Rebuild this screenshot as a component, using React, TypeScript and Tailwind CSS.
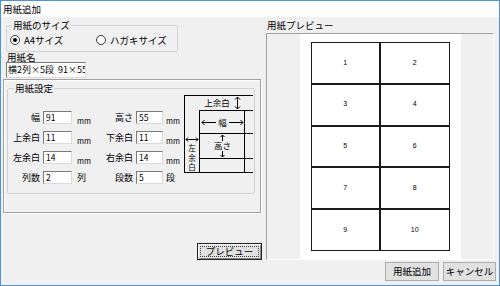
import React from 'react'

const rows = [
  { l1: '幅', v1: '91', l2: '高さ', v2: '55', u1: 'mm', u2: 'mm' },
  { l1: '上余白', v1: '11', l2: '下余白', v2: '11', u1: 'mm', u2: 'mm' },
  { l1: '左余白', v1: '14', l2: '右余白', v2: '14', u1: 'mm', u2: 'mm' },
  { l1: '列数', v1: '2', l2: '段数', v2: '5', u1: '列', u2: '段' },
]

const Radio: React.FC<{ checked?: boolean; label: string; className?: string }> = ({ checked, label, className }) => (
  <div className={`flex items-center gap-[4px] ${className ?? ''}`}>
    <span className="w-[10px] h-[10px] rounded-full border border-[#3c3c3c] bg-white flex items-center justify-center">
      {checked && <span className="w-[4px] h-[4px] rounded-full bg-black" />}
    </span>
    <span className="text-[9.5px] leading-[12px]">{label}</span>
  </div>
)

const Field: React.FC<{ value: string; width: string }> = ({ value, width }) => (
  <div className={`${width} h-[13px] bg-white border border-t-[#7a7a7a] border-l-[#7a7a7a] border-r-[#d9d9d9] border-b-[#d9d9d9] text-[8.5px] leading-[11px] pl-[2px] overflow-hidden whitespace-nowrap`}>
    {value}
  </div>
)

const Diagram = () => (
  <svg width="69" height="78" viewBox="0 0 69 78" className="flex-none mt-[1px]" shapeRendering="crispEdges">
    <g stroke="#000" strokeWidth="1" fill="none">
      <path d="M0 0.5H69M0.5 0V78M15 15.5H69M15.5 15V78M60.5 15V78M15 38.5H69M15 63.5H69M0 77.5H69" />
    </g>
    <g stroke="#000" strokeWidth="1" fill="none" shapeRendering="auto">
      <path d="M53.5 2V14M51 4.5L53.5 2L56 4.5M51 11.5L53.5 14L56 11.5" />
      <path d="M18 27.5H32M20.5 25L18 27.5L20.5 30M45 27.5H59M56.5 25L59 27.5L56.5 30" />
      <path d="M38.5 40V46M36.5 42L38.5 40L40.5 42M38.5 56V62M36.5 60L38.5 62L40.5 60" />
      <path d="M2 44.5H14M4 42.5L2 44.5L4 46.5M12 42.5L14 44.5L12 46.5" />
    </g>
    <g fill="#000" fontSize="8.5" fontFamily="'Noto Sans CJK JP', sans-serif" textAnchor="middle">
      <text x="33" y="11">上余白</text>
      <text x="38.5" y="31">幅</text>
      <text x="38.5" y="54">高さ</text>
    </g>
    <g fill="#000" fontSize="7.5" fontFamily="'Noto Sans CJK JP', sans-serif" textAnchor="middle">
      <text x="8" y="56">左</text>
      <text x="8" y="65.5">余</text>
      <text x="8" y="75">白</text>
    </g>
  </svg>
)

export default function App() {
  return (
    <div className="w-[500px] h-[286px] border border-[#4a94dc] bg-[#f0f0f0] flex flex-col text-black font-['Noto_Sans_CJK_JP','Noto_Sans',sans-serif] overflow-hidden">
      <div className="h-[16px] bg-white flex items-center pl-[2px] text-[9.5px] leading-[12px]">用紙追加</div>

      <div className="flex gap-[3px] h-[243px]">
        <div className="w-[262px] flex flex-col">
          <fieldset className="ml-[5px] mt-[2px] w-[172px] h-[33px] border border-[#d2d2d2] rounded-[2px]">
            <legend className="ml-[5px] px-[1px] text-[9.5px] leading-[12px]">用紙のサイズ</legend>
            <div className="flex pt-[3px] pl-[3px]">
              <Radio checked label="A4サイズ" className="w-[86px]" />
              <Radio label="ハガキサイズ" />
            </div>
          </fieldset>

          <div className="ml-[6px] h-[10px] text-[9.5px] leading-[10px]">用紙名</div>
          <div className="ml-[5px] w-[80px] h-[16px] bg-white border border-t-[#7a7a7a] border-l-[#7a7a7a] border-r-[#d9d9d9] border-b-[#d9d9d9] text-[9px] leading-[14px] pl-[1px] overflow-hidden whitespace-nowrap">
            横2列×5段&nbsp;&nbsp;91×55
          </div>

          <div className="ml-[2px] mt-[1px] w-[258px] h-[134px] border border-[#a0a0a0] shadow-[inset_1px_1px_0_#ffffff,1px_1px_0_#ffffff]">
            <fieldset className="ml-[3px] mt-[2px] w-[248px] h-[112px] border border-[#d2d2d2] rounded-[2px]">
              <legend className="ml-[6px] px-[1px] text-[9.5px] leading-[12px]">用紙設定</legend>
              <div className="flex">
                <div className="w-[176px] flex flex-col gap-[7px] pt-[17px]">
                  {rows.map((r, i) => (
                    <div key={i} className="flex h-[13px] text-[9px] leading-[13px]">
                      <span className="w-[35px] text-right pr-[3px]">{r.l1}</span>
                      <Field value={r.v1} width="w-[29px]" />
                      <span className={`w-[34px] pl-[5px] ${r.u1 === 'mm' ? 'text-[7.5px] mt-[3px]' : ''}`}>{r.u1}</span>
                      <span className="w-[30px] text-right pr-[3px]">{r.l2}</span>
                      <Field value={r.v2} width="w-[27px]" />
                      <span className={`pl-[3px] ${r.u2 === 'mm' ? 'text-[7.5px] mt-[3px]' : ''}`}>{r.u2}</span>
                    </div>
                  ))}
                </div>
                <Diagram />
              </div>
            </fieldset>
          </div>

          <button className="self-end mr-[1px] mt-[30px] w-[65px] h-[17px] bg-[#e1e1e1] border border-[#222] shadow-[inset_1px_1px_0_#ffffff,inset_-1px_-1px_0_#8a8a8a] p-[2px] flex">
            <span className="flex-1 border border-dotted border-[#444] text-[9.5px] leading-[9px] flex items-center justify-center">プレビュー</span>
          </button>
        </div>

        <div className="w-[228px] flex flex-col">
          <div className="h-[16px] pl-[1px] text-[9.5px] leading-[14px] flex items-center">用紙プレビュー</div>
          <div className="h-[227px] border border-t-[#a0a0a0] border-l-[#a0a0a0] border-r-white border-b-white bg-[#f0f0f0] flex justify-center">
            <div className="w-[161px] h-full bg-white pl-[11px] pt-[8px]">
              <div className="w-[139px] h-[209px] grid grid-cols-2 grid-rows-5">
                {Array.from({ length: 10 }, (_, i) => (
                  <div key={i} className="border border-[#1a1a1a] flex items-center justify-center text-[7px] font-['Liberation_Sans',sans-serif]">
                    {i + 1}
                  </div>
                ))}
              </div>
            </div>
          </div>
        </div>
      </div>

      <div className="flex justify-end gap-[4px] pr-[3px] mt-[2px]">
        <button className="w-[54px] h-[19px] bg-[#e1e1e1] border border-[#adadad] text-[9.5px] leading-[17px]">用紙追加</button>
        <button className="w-[53px] h-[19px] bg-[#e1e1e1] border border-[#adadad] text-[9.5px] leading-[17px]">キャンセル</button>
      </div>
    </div>
  )
}
